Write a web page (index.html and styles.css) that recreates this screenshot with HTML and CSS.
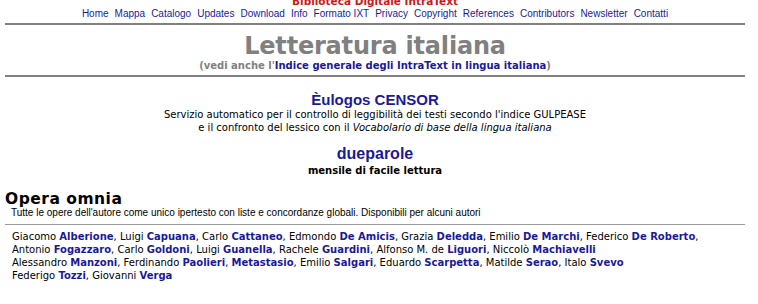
FILE: index.html
```html
<!DOCTYPE html>
<html lang="it">
<head>
<meta charset="utf-8">
<title>Letteratura italiana</title>
<link rel="stylesheet" href="styles.css">
</head>
<body>
<div class="page">
  <header class="top">
    <div class="brand">Biblioteca Digitale IntraText</div>
    <nav class="nav">
      <a href="#">Home</a><a href="#">Mappa</a><a href="#">Catalogo</a><a href="#">Updates</a><a href="#">Download</a><a href="#">Info</a><a href="#">Formato IXT</a><a href="#">Privacy</a><a href="#">Copyright</a><a href="#">References</a><a href="#">Contributors</a><a href="#">Newsletter</a><a href="#">Contatti</a>
    </nav>
  </header>
  <hr class="rule thick">
  <section class="heading">
    <h1 class="title">Letteratura italiana</h1>
    <p class="see">(vedi anche l'<a href="#">Indice generale degli IntraText in lingua italiana</a>)</p>
  </section>
  <hr class="rule thick">
  <section class="promo promo-censor">
    <a class="promo-title" href="#">Èulogos CENSOR</a>
    <p class="promo-text">Servizio automatico per il controllo di leggibilità dei testi secondo l'indice GULPEASE<br>e il confronto del lessico con il <i>Vocabolario di base della lingua italiana</i></p>
  </section>
  <section class="promo promo-due">
    <a class="promo-title big" href="#">dueparole</a>
    <p class="promo-sub">mensile di facile lettura</p>
  </section>
  <section class="opera">
    <h2 class="opera-title">Opera omnia</h2>
    <p class="opera-desc">Tutte le opere dell'autore come unico ipertesto con liste e concordanze globali. Disponibili per alcuni autori</p>
    <hr class="rule thin">
    <p class="authors">Giacomo <a href="#">Alberione</a>, Luigi <a href="#">Capuana</a>, Carlo <a href="#">Cattaneo</a>, Edmondo <a href="#">De Amicis</a>, Grazia <a href="#">Deledda</a>, Emilio <a href="#">De Marchi</a>, Federico <a href="#">De Roberto</a>,<br>Antonio <a href="#">Fogazzaro</a>, Carlo <a href="#">Goldoni</a>, Luigi <a href="#">Guanella</a>, Rachele <a href="#">Guardini</a>, Alfonso M. de <a href="#">Liguori</a>, Niccolò <a href="#">Machiavelli</a><br>Alessandro <a href="#">Manzoni</a>, Ferdinando <a href="#">Paolieri</a>, <a href="#">Metastasio</a>, Emilio <a href="#">Salgari</a>, Eduardo <a href="#">Scarpetta</a>, Matilde <a href="#">Serao</a>, Italo <a href="#">Svevo</a><br>Federigo <a href="#">Tozzi</a>, Giovanni <a href="#">Verga</a></p>
  </section>
</div>
</body>
</html>
```

FILE: styles.css
```css
html, body {
  margin: 0;
  padding: 0;
  background: #ffffff;
}

body {
  font-family: "DejaVu Sans", Verdana, sans-serif;
  color: #000000;
  overflow: hidden;
}

a {
  color: #1a1a99;
  text-decoration: none;
}

.page {
  width: 740px;
  padding: 0 0 0 5px;
}

.top {
  display: flex;
  flex-direction: column;
  align-items: center;
  margin-top: -5px;
}

.brand {
  font-weight: bold;
  font-size: 10.5px;
  line-height: 12px;
  color: #cc1a1a;
}

.nav {
  display: flex;
  gap: 6px;
  font-family: "Liberation Sans", Arial, sans-serif;
  font-size: 10px;
  line-height: 13px;
}

.rule {
  border: 0;
  margin: 0;
  background: #808080;
}

.rule.thick {
  height: 2px;
  margin-top: 3px;
}

.rule.thin {
  height: 1px;
  background: #9a9a9a;
  margin-top: 6px;
}

.heading {
  display: flex;
  flex-direction: column;
  align-items: center;
  padding-top: 8px;
}

.title {
  margin: 0;
  font-size: 24px;
  line-height: 26px;
  letter-spacing: -0.2px;
  font-weight: bold;
  color: #808080;
}

.see {
  margin: 0;
  font-size: 10px;
  line-height: 13px;
  font-weight: bold;
  color: #808080;
}

.promo {
  display: flex;
  flex-direction: column;
  align-items: center;
  text-align: center;
}

.promo-censor {
  padding-top: 15px;
}

.promo-title {
  font-family: "Liberation Sans", Arial, sans-serif;
  font-weight: bold;
  font-size: 15px;
  line-height: 16px;
}

.promo-title.big {
  font-size: 16px;
  line-height: 20px;
}

.promo-text {
  margin: 0;
  font-size: 10px;
  line-height: 13px;
}

.promo-due {
  padding-top: 10px;
}

.promo-sub {
  margin: 0;
  font-size: 10px;
  line-height: 13px;
  font-weight: bold;
}

.opera {
  padding-top: 14px;
}

.opera-title {
  margin: 0;
  font-size: 15.5px;
  line-height: 16px;
  letter-spacing: 0.5px;
  font-weight: bold;
}

.opera-desc {
  margin: 0;
  padding-left: 6px;
  font-family: "Liberation Sans", Arial, sans-serif;
  font-size: 10px;
  line-height: 11px;
}

.authors {
  margin: 5px 0 0;
  padding-left: 7px;
  font-size: 10px;
  line-height: 13px;
}

.authors a {
  font-weight: bold;
}
```
